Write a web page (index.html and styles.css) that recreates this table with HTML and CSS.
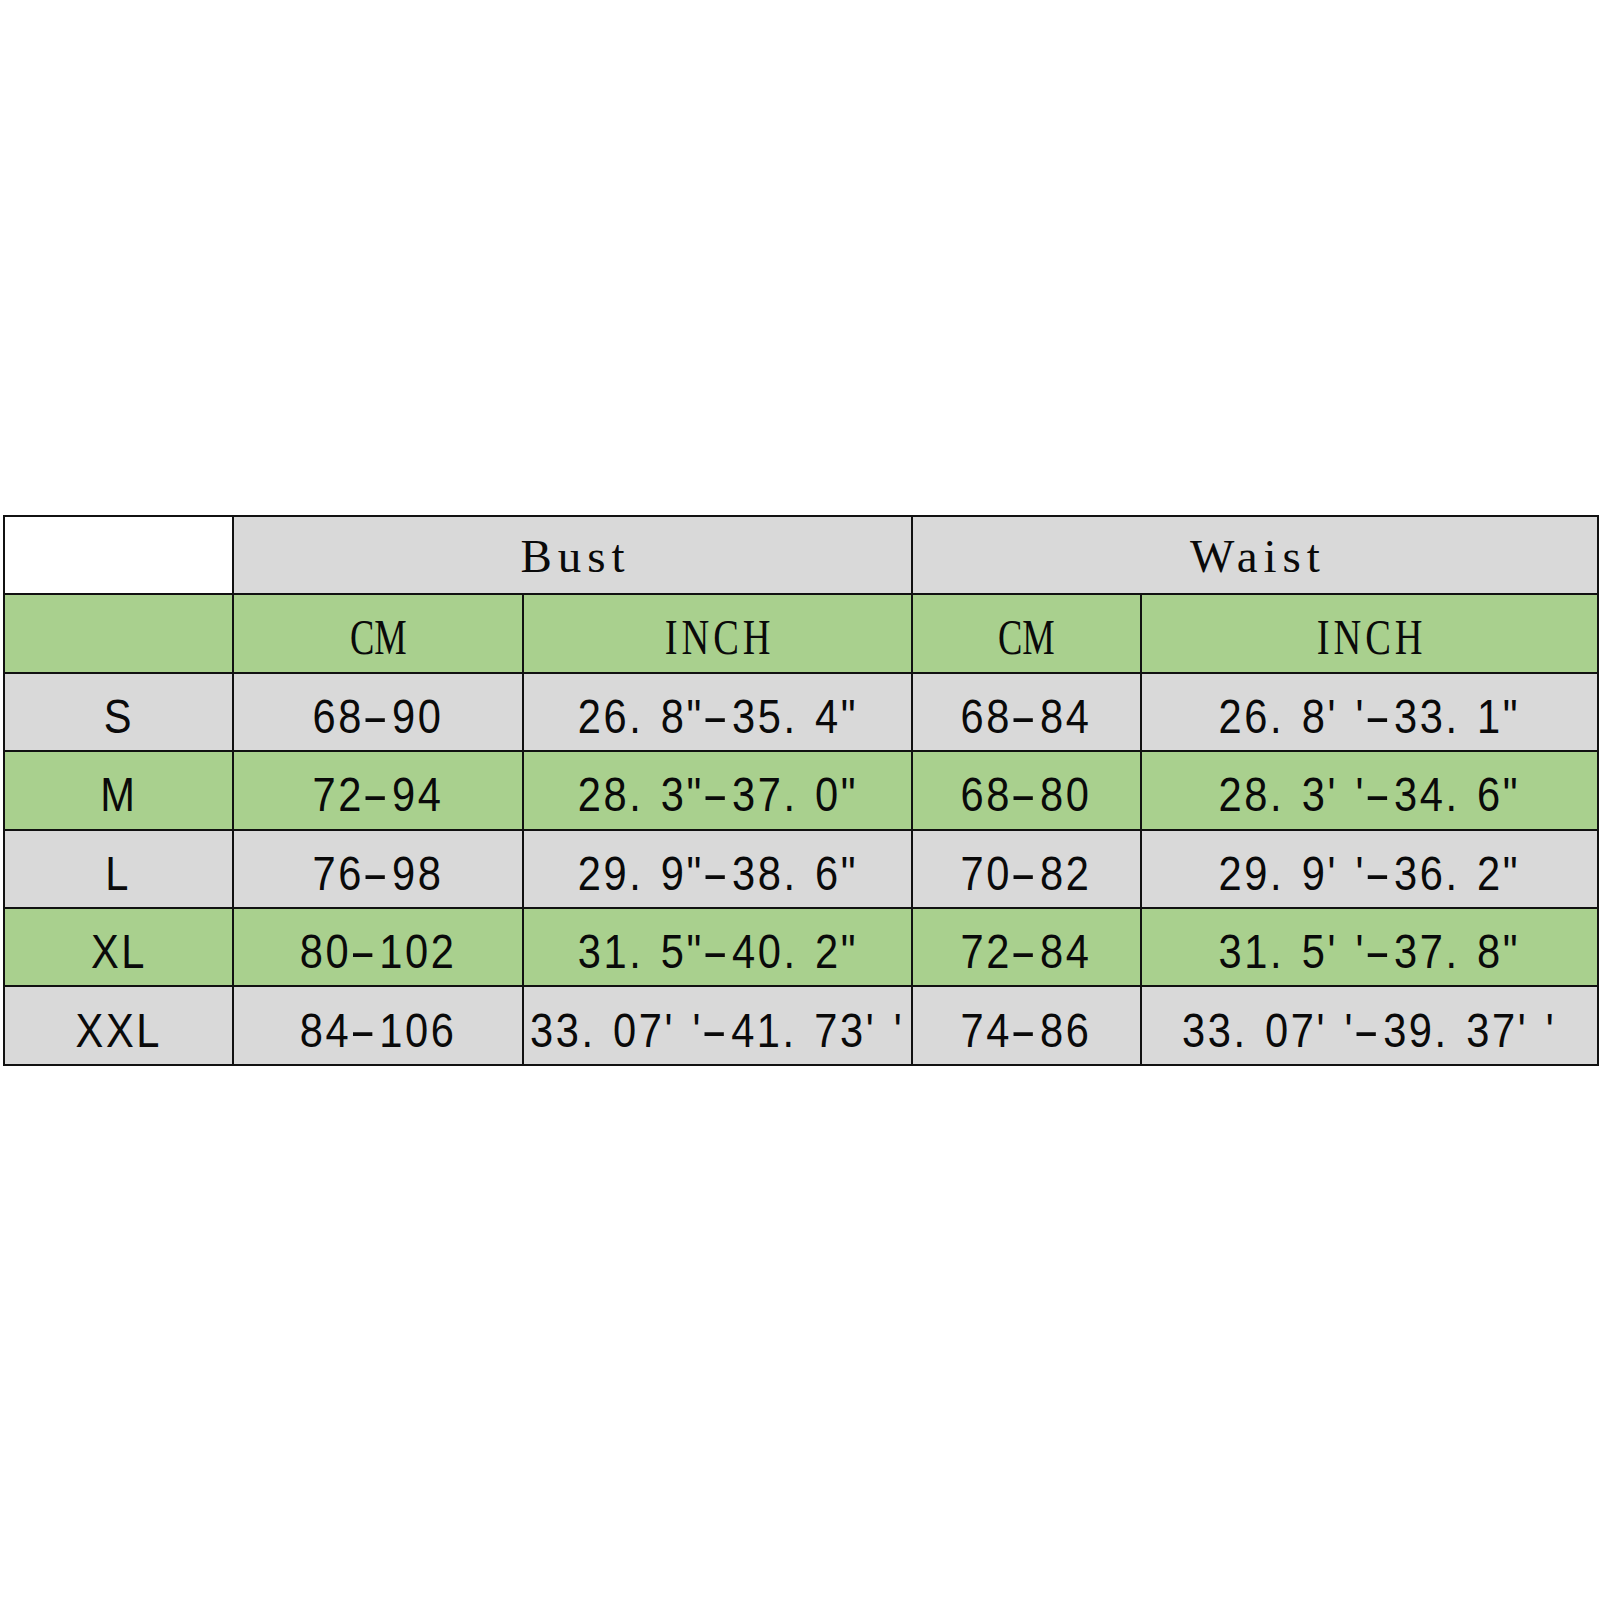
FILE: index.html
```html
<!DOCTYPE html>
<html>
<head>
<meta charset="utf-8">
<link rel="stylesheet" href="styles.css">
</head>
<body>
<div class="chart">
  <div class="cell blank"></div>
  <div class="cell gray span2 title"><span class="bust">Bust</span></div>
  <div class="cell gray span2 title"><span class="waist">Waist</span></div>

  <div class="cell green"></div>
  <div class="cell green unit"><span class="cm">CM</span></div>
  <div class="cell green unit"><span class="inch">INCH</span></div>
  <div class="cell green unit"><span class="cm">CM</span></div>
  <div class="cell green unit"><span class="inch">INCH</span></div>

  <div class="cell gray"><span class="t">S</span></div>
  <div class="cell gray"><span class="t">68<span class="d">-</span>90</span></div>
  <div class="cell gray"><span class="t">26. 8"<span class="d">-</span>35. 4"</span></div>
  <div class="cell gray"><span class="t">68<span class="d">-</span>84</span></div>
  <div class="cell gray"><span class="t">26. 8' '<span class="d">-</span>33. 1"</span></div>

  <div class="cell green"><span class="t">M</span></div>
  <div class="cell green"><span class="t">72<span class="d">-</span>94</span></div>
  <div class="cell green"><span class="t">28. 3"<span class="d">-</span>37. 0"</span></div>
  <div class="cell green"><span class="t">68<span class="d">-</span>80</span></div>
  <div class="cell green"><span class="t">28. 3' '<span class="d">-</span>34. 6"</span></div>

  <div class="cell gray"><span class="t">L</span></div>
  <div class="cell gray"><span class="t">76<span class="d">-</span>98</span></div>
  <div class="cell gray"><span class="t">29. 9"<span class="d">-</span>38. 6"</span></div>
  <div class="cell gray"><span class="t">70<span class="d">-</span>82</span></div>
  <div class="cell gray"><span class="t">29. 9' '<span class="d">-</span>36. 2"</span></div>

  <div class="cell green"><span class="t">XL</span></div>
  <div class="cell green"><span class="t">80<span class="d">-</span>102</span></div>
  <div class="cell green"><span class="t">31. 5"<span class="d">-</span>40. 2"</span></div>
  <div class="cell green"><span class="t">72<span class="d">-</span>84</span></div>
  <div class="cell green"><span class="t">31. 5' '<span class="d">-</span>37. 8"</span></div>

  <div class="cell gray"><span class="t">XXL</span></div>
  <div class="cell gray"><span class="t">84<span class="d">-</span>106</span></div>
  <div class="cell gray"><span class="t">33. 07' '<span class="d">-</span>41. 73' '</span></div>
  <div class="cell gray"><span class="t">74<span class="d">-</span>86</span></div>
  <div class="cell gray"><span class="t">33. 07' '<span class="d">-</span>39. 37' '</span></div>
</div>
</body>
</html>
```

FILE: styles.css
```css
html, body {
  margin: 0;
  padding: 0;
  background: #ffffff;
}

body {
  padding: 515px 0 0 3px;
}

.chart {
  display: grid;
  grid-template-columns: 227px 288px 387px 227px 455px;
  grid-template-rows: repeat(7, 76.4px);
  gap: 2px;
  padding: 2px;
  width: max-content;
  background: #111111;
}

.cell {
  display: flex;
  align-items: center;
  justify-content: center;
  overflow: visible;
  white-space: nowrap;
  font-family: "Liberation Sans", Arial, sans-serif;
  font-size: 49px;
  color: #0a0a0a;
  padding-top: 8px;
  box-sizing: border-box;
}

.blank { background: #ffffff; }
.gray { background: #d9d9d9; }
.green { background: #a9d08e; }

.span2 { grid-column: span 2; }

.title {
  font-family: "Liberation Serif", "Times New Roman", serif;
  font-size: 47px;
  padding-top: 2px;
}

.bust { letter-spacing: 6px; margin-left: 6px; }
.waist { letter-spacing: 6px; margin-left: 6px; }

.unit {
  font-family: "Liberation Serif", "Times New Roman", serif;
  font-size: 48px;
  padding-top: 6px;
}

.unit span {
  display: inline-block;
}

.cm {
  transform: scale(0.76, 1.05);
}

.inch {
  transform: scale(0.8, 1.05);
  letter-spacing: 5px;
  margin-left: 5px;
}

.t {
  display: inline-block;
  transform: scaleX(0.85);
  letter-spacing: 3px;
  word-spacing: 4px;
}

.d {
  display: inline-block;
  transform: scaleX(1.9);
  margin: 0 0.14em;
}
```
